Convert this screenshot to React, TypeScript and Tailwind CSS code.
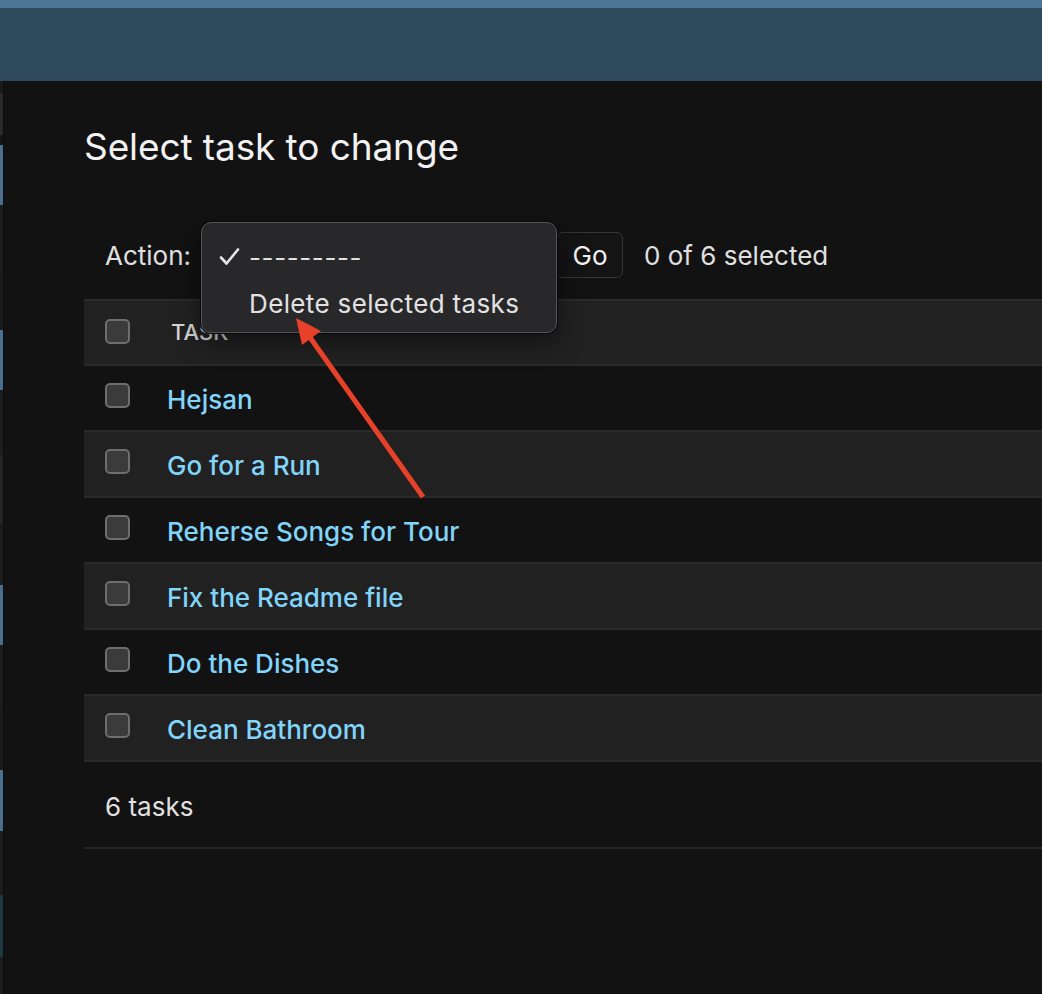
import React from "react";

const segments: { h: number; c: string }[] = [
  { h: 12, c: "#1a1a1a" },
  { h: 42, c: "#2a2a2a" },
  { h: 10, c: "#141414" },
  { h: 60, c: "#4a6f8c" },
  { h: 65, c: "#1c1c1c" },
  { h: 60, c: "#1a1a1a" },
  { h: 60, c: "#4a6f8c" },
  { h: 65, c: "#1c1c1c" },
  { h: 68, c: "#262626" },
  { h: 62, c: "#1c1c1c" },
  { h: 60, c: "#4a6f8c" },
  { h: 64, c: "#1c1c1c" },
  { h: 61, c: "#1a1a1a" },
  { h: 61, c: "#4a6f8c" },
  { h: 64, c: "#1c1c1c" },
  { h: 62, c: "#1e3a40" },
  { h: 60, c: "#1c1c1c" },
];

const tasks = [
  "Hejsan",
  "Go for a Run",
  "Reherse Songs for Tour",
  "Fix the Readme file",
  "Do the Dishes",
  "Clean Bathroom",
];

function Checkbox() {
  return (
    <div className="w-[25px] h-[25px] rounded-[5px] border-2 border-[#6e6e6e] bg-[#3b3b3b] shrink-0" />
  );
}

export default function App() {
  return (
    <div className="relative min-h-screen w-full overflow-hidden bg-[#121212] font-['Inter','Noto_Sans',sans-serif] text-[#e0e0e0]">
      <div className="h-[8px] bg-[#4e7493]" />
      <div className="h-[73px] bg-[#2f4a5d]" />
      <div className="flex min-h-[913px]">
        <div className="flex w-[3px] flex-col border-r border-[#0c0c0c] box-content">
          {segments.map((s, i) => (
            <div key={i} style={{ height: s.h, background: s.c }} />
          ))}
        </div>
        <div className="flex-1 pl-[80px]">
          <h1 className="mt-[44px] text-[37px] leading-[44px] font-normal text-[#f2f2f2] tracking-[-0.1px]">
            Select task to change
          </h1>

          <div className="mt-[63px] flex h-[46px] items-center pl-[21px] text-[26px]">
            <span className="text-[#e0e0e0]">Action:</span>
            <div className="relative ml-[10px] h-[46px] w-[344px]">
              <div className="absolute left-0 top-[-10px] z-10 h-[111px] w-[356px] rounded-[10px] border border-[#545456] bg-[#28282a] pt-[11px] shadow-[0_0_0_1px_#0a0a0a,0_8px_24px_rgba(0,0,0,0.5)]">
                <div className="flex h-[46px] items-center pl-[17px]">
                  <svg width="21" height="18" viewBox="0 0 21 18" className="mr-[9px]">
                    <path
                      d="M2 9.5 L7.5 15.5 L19 1.5"
                      fill="none"
                      stroke="#e6e6e6"
                      strokeWidth="2.6"
                      strokeLinecap="round"
                      strokeLinejoin="round"
                    />
                  </svg>
                  <span className="tracking-[0.6px] text-[#e2e2e2]">---------</span>
                </div>
                <div className="flex h-[46px] items-center pl-[47px] tracking-[0.35px] text-[#e2e2e2]">
                  Delete selected tasks
                </div>
              </div>
            </div>
            <div className="ml-[12px] flex h-[46px] w-[66px] items-center justify-center rounded-[6px] border border-[#353535] bg-[#141414] text-[#f0f0f0]">
              Go
            </div>
            <span className="ml-[21px] text-[#e0e0e0]">0 of 6 selected</span>
          </div>

          <div className="mt-[21px]">
            <div className="flex h-[67px] items-center border-y-2 border-[#2a2a2a] bg-[#212121] pl-[21px]">
              <div className="mb-[2px]">
                <Checkbox />
              </div>
              <span className="ml-[41px] text-[22px] font-medium uppercase text-[#d4d4d4]">Task</span>
            </div>
            {tasks.map((t, i) => (
              <div
                key={t}
                className={`flex h-[66px] items-center border-b-2 border-[#2a2a2a] pl-[21px] ${
                  i % 2 === 1 ? "bg-[#212121]" : "bg-[#121212]"
                }`}
              >
                <div className="mb-[6px]">
                  <Checkbox />
                </div>
                <span className="ml-[37px] mt-[2px] text-[26px] font-medium text-[#81d4fa]">{t}</span>
              </div>
            ))}
            <div className="flex h-[87px] items-center border-b-2 border-[#262626] pl-[21px] pt-[4px] text-[26px] text-[#e0e0e0]">
              6 tasks
            </div>
          </div>
        </div>
      </div>

      <svg
        className="pointer-events-none absolute left-0 top-0 z-20"
        width="1042"
        height="994"
        viewBox="0 0 1042 994"
      >
        <line x1="423" y1="497" x2="309" y2="336" stroke="#e8412a" strokeWidth="5" strokeLinecap="butt" />
        <polygon points="296,318 321,331 302,345" fill="#e8412a" />
      </svg>
    </div>
  );
}
